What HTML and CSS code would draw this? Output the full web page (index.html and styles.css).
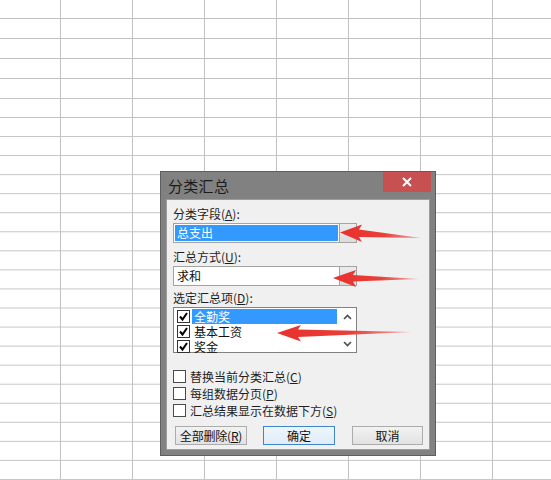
FILE: index.html
```html
<!DOCTYPE html>
<html lang="zh-CN">
<head>
<meta charset="utf-8">
<title>分类汇总</title>
<link rel="stylesheet" href="styles.css">
</head>
<body>
<div class="sheet">
  <div class="sheet-top"></div>
  <div class="sheet-bottom"></div>
</div>

<div class="dialog">
  <div class="titlebar">
    <span class="title">分类汇总</span>
    <span class="close">
      <svg width="10" height="10" viewBox="0 0 10 10"><path d="M1 1 L9 9 M9 1 L1 9" stroke="#fff" stroke-width="2" fill="none"/></svg>
    </span>
  </div>
  <div class="content">
    <div class="label">分类字段(<u>A</u>):</div>
    <div class="combo">
      <div class="combo-value"><span class="sel">总支出</span></div>
      <div class="combo-btn"><svg width="7" height="4" viewBox="0 0 7 4"><path d="M0.5 0.5 L3.5 3.5 L6.5 0.5" stroke="#444" stroke-width="1.3" fill="none"/></svg></div>
    </div>

    <div class="label gap2">汇总方式(<u>U</u>):</div>
    <div class="combo">
      <div class="combo-value"><span class="plain">求和</span></div>
      <div class="combo-btn"><svg width="7" height="4" viewBox="0 0 7 4"><path d="M0.5 0.5 L3.5 3.5 L6.5 0.5" stroke="#444" stroke-width="1.3" fill="none"/></svg></div>
    </div>

    <div class="label gap3">选定汇总项(<u>D</u>):</div>
    <div class="listbox">
      <div class="items">
        <div class="item">
          <span class="cb"><svg width="11" height="11" viewBox="0 0 11 11"><path d="M2 5.5 L4.5 8.5 L9 2" stroke="#000" stroke-width="2" fill="none"/></svg></span>
          <span class="item-text active">全勤奖</span>
        </div>
        <div class="item">
          <span class="cb"><svg width="11" height="11" viewBox="0 0 11 11"><path d="M2 5.5 L4.5 8.5 L9 2" stroke="#000" stroke-width="2" fill="none"/></svg></span>
          <span class="item-text">基本工资</span>
        </div>
        <div class="item">
          <span class="cb"><svg width="11" height="11" viewBox="0 0 11 11"><path d="M2 5.5 L4.5 8.5 L9 2" stroke="#000" stroke-width="2" fill="none"/></svg></span>
          <span class="item-text">奖金</span>
        </div>
      </div>
      <div class="scrollbar">
        <svg width="9" height="6" viewBox="0 0 9 6"><path d="M1 5 L4.5 1.5 L8 5" stroke="#505050" stroke-width="1.7" fill="none"/></svg>
        <svg width="9" height="6" viewBox="0 0 9 6"><path d="M1 1 L4.5 4.5 L8 1" stroke="#505050" stroke-width="1.7" fill="none"/></svg>
      </div>
    </div>

    <div class="options">
      <label class="option"><span class="box"></span>替换当前分类汇总(<u>C</u>)</label>
      <label class="option"><span class="box"></span>每组数据分页(<u>P</u>)</label>
      <label class="option"><span class="box"></span>汇总结果显示在数据下方(<u>S</u>)</label>
    </div>

    <div class="buttons">
      <div class="btn btn-del">全部删除(<u>R</u>)</div>
      <div class="btn btn-ok">确定</div>
      <div class="btn btn-cancel">取消</div>
    </div>
  </div>
</div>

<svg class="arrows" width="551" height="480" viewBox="0 0 551 480">
  <defs>
    <linearGradient id="ag1" x1="0" y1="0" x2="1" y2="0">
      <stop offset="0" stop-color="#e8302c"/>
      <stop offset="0.55" stop-color="#e8403a"/>
      <stop offset="1" stop-color="#f3a9a6"/>
    </linearGradient>
  </defs>
  <path d="M340 232.5 L362 224.5 L359 229.5 L421 238 L359 237 L362 242 Z" fill="url(#ag1)"/>
  <path d="M333 278 L356 270 L353 275 L419 279 L353 281.5 L356 287 Z" fill="url(#ag1)"/>
  <path d="M277 333 L301 325 L298 329.5 L412 332 L298 337 L301 341.5 Z" fill="url(#ag1)"/>
</svg>
</body>
</html>
```

FILE: styles.css
```css
* { box-sizing: border-box; }

html, body {
  margin: 0;
  padding: 0;
}

body {
  width: 551px;
  height: 480px;
  overflow: hidden;
  position: relative;
  background: #ffffff;
  font-family: "Noto Sans CJK SC", "Liberation Sans", sans-serif;
  font-size: 12px;
  color: #1e1e1e;
}

u { text-decoration: underline; text-underline-offset: 1px; }

/* spreadsheet grid */
.sheet {
  height: 480px;
}

.sheet-top,
.sheet-bottom {
  background-image:
    linear-gradient(to right, #c2c2c2 1px, transparent 1px),
    linear-gradient(to bottom, #c2c2c2 1px, transparent 1px);
  background-size: 72px 100%, 100% 20px;
  background-position: 60px 0, 0 18px;
}

.sheet-top {
  height: 98px;
}

.sheet-bottom {
  height: 382px;
  background-size: 72px 100%, 100% 19.05px;
  background-position: 60px 0, 0 0;
}

/* dialog window */
.dialog {
  position: absolute;
  left: 160px;
  top: 171px;
  width: 276px;
  height: 285px;
  border: 1px solid #5e5e5e;
  background: #818181;
  display: flex;
  flex-direction: column;
}

.titlebar {
  height: 27px;
  flex: none;
  display: flex;
  justify-content: space-between;
  align-items: flex-start;
  padding-left: 7px;
  padding-right: 4px;
}

.title {
  font-size: 15px;
  line-height: 27px;
  color: #1b1b1b;
  letter-spacing: 0.3px;
}

.close {
  width: 48px;
  height: 20px;
  background: #c75150;
  display: flex;
  align-items: center;
  justify-content: center;
}

.content {
  flex: 1;
  margin: 0 5px 5px 5px;
  background: #f0f0f0;
  border: 1px solid #9c9c9c;
  padding: 7px 0 0 6px;
  display: flex;
  flex-direction: column;
}

.label {
  line-height: 14px;
  height: 14px;
  color: #1e1e1e;
}

.gap2 { margin-top: 7px; }
.gap3 { margin-top: 5px; }

.combo {
  margin-top: 2px;
  width: 184px;
  height: 20px;
  border: 1px solid #a3a3a3;
  background: #ffffff;
  display: flex;
}

.combo-value {
  flex: 1;
  padding: 1px;
  display: flex;
}

.combo-value .sel {
  flex: 1;
  background: #3399ff;
  color: #ffffff;
  line-height: 16px;
  padding-left: 2px;
}

.combo-value .plain {
  flex: 1;
  line-height: 16px;
  padding-left: 2px;
  color: #111;
}

.combo-btn {
  width: 18px;
  margin: -1px -1px -1px 0;
  border: 1px solid #a3a3a3;
  background: linear-gradient(#ececec, #dcdcdc);
  display: flex;
  align-items: center;
  justify-content: center;
}

.listbox {
  margin-top: 2px;
  width: 184px;
  height: 46px;
  border: 1px solid #828282;
  background: #ffffff;
  display: flex;
}

.items {
  flex: 1;
  padding-top: 1px;
}

.item {
  height: 15px;
  display: flex;
  align-items: center;
  padding-left: 3px;
}

.cb {
  width: 13px;
  height: 13px;
  border: 1px solid #333;
  background: #fff;
  display: flex;
  align-items: center;
  justify-content: center;
  flex: none;
}

.item-text {
  flex: 1;
  line-height: 15px;
  height: 15px;
  padding-left: 2px;
  margin-left: 2px;
  margin-right: 2px;
  color: #111;
  overflow: hidden;
}

.item-text.active {
  background: #3399ff;
  color: #ffffff;
}

.scrollbar {
  width: 17px;
  display: flex;
  flex-direction: column;
  justify-content: space-between;
  align-items: center;
  padding: 6px 0 5px 0;
}

.options {
  margin-top: 15px;
  display: flex;
  flex-direction: column;
}

.option {
  height: 17px;
  display: flex;
  align-items: center;
  color: #1e1e1e;
}

.box {
  width: 13px;
  height: 13px;
  border: 1px solid #4a4a4a;
  background: #ffffff;
  margin-right: 4px;
  flex: none;
}

.buttons {
  margin-top: 7px;
  display: flex;
  padding-left: 2px;
}

.btn {
  height: 19px;
  width: 72px;
  border: 1px solid #acacac;
  background: linear-gradient(#f2f2f2, #e2e2e2);
  display: flex;
  align-items: center;
  justify-content: center;
  line-height: 17px;
  color: #111;
}

.btn-del {
  letter-spacing: -0.2px;
}

.btn-ok {
  margin-left: 16px;
  border-color: #3f86c6;
  background: linear-gradient(#eef5fc, #e0ecf8);
}

.btn-cancel {
  margin-left: 17px;
  width: 71px;
}

/* annotation arrows overlay */
.arrows {
  position: absolute;
  left: 0;
  top: 0;
  pointer-events: none;
}
```
